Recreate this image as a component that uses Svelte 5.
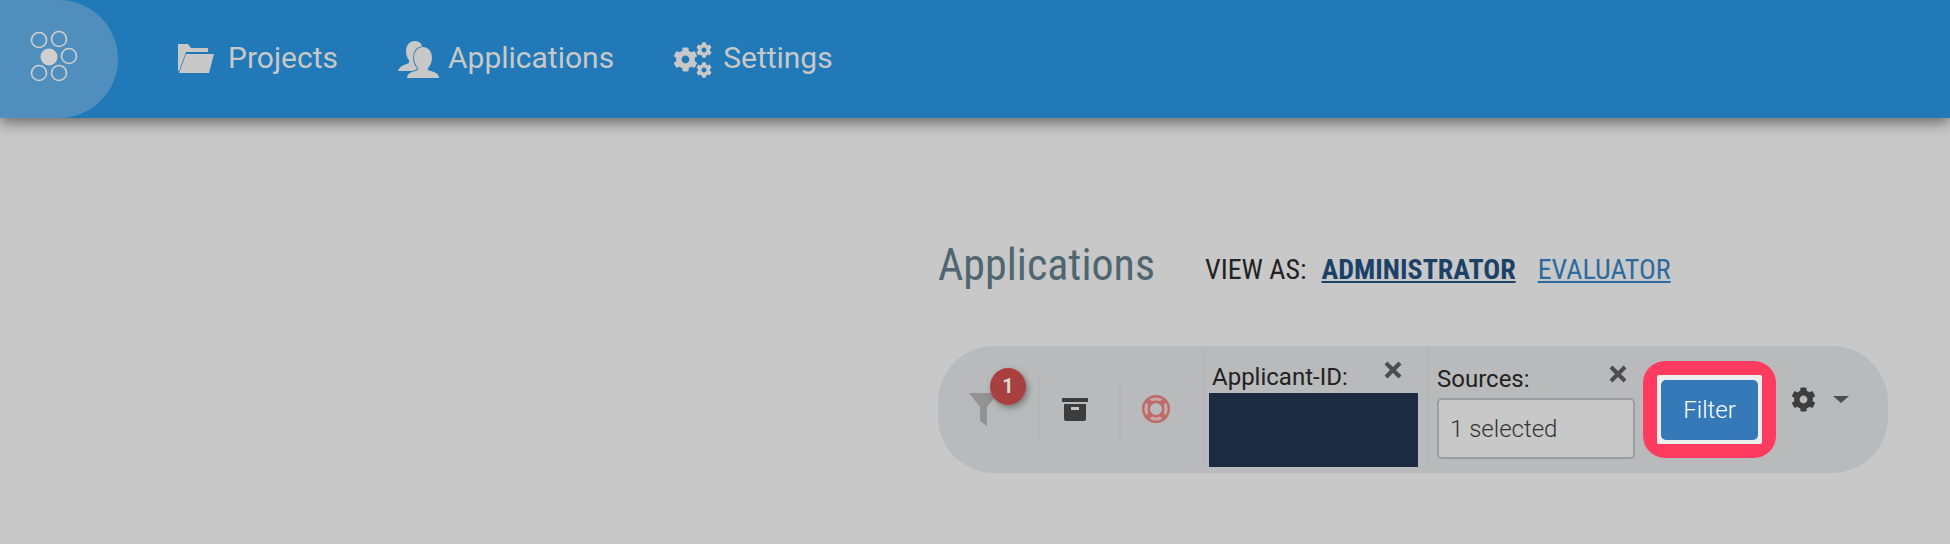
<script>
  const navItems = [
    { label: "Projects", icon: "folder" },
    { label: "Applications", icon: "users" },
    { label: "Settings", icon: "gears" }
  ];
  const rings = [[39, 40], [59, 39], [69, 56], [39, 73], [59, 73]];
  const gear = "M487.4 315.7l-42.6-24.6c4.3-23.2 4.3-47 0-70.2l42.6-24.6c4.9-2.8 7.1-8.6 5.5-14-11.1-35.6-30-67.8-54.7-94.6-3.8-4.1-10-5.1-14.8-2.3L380.8 110c-17.9-15.4-38.5-27.3-60.8-35.1V25.8c0-5.6-3.9-10.5-9.4-11.7-36.7-8.2-74.3-7.8-109.2 0-5.5 1.2-9.4 6.1-9.4 11.7V75c-22.2 7.9-42.8 19.8-60.8 35.1L88.7 85.5c-4.9-2.8-11-1.9-14.8 2.3-24.7 26.7-43.6 58.9-54.7 94.6-1.7 5.4.6 11.2 5.5 14L67.3 221c-4.3 23.2-4.3 47 0 70.2l-42.6 24.6c-4.9 2.8-7.1 8.6-5.5 14 11.1 35.6 30 67.8 54.7 94.6 3.8 4.1 10 5.1 14.8 2.3l42.6-24.6c17.9 15.4 38.5 27.3 60.8 35.1v49.2c0 5.6 3.9 10.5 9.4 11.7 36.7 8.2 74.3 7.8 109.2 0 5.5-1.2 9.4-6.1 9.4-11.7v-49.2c22.2-7.9 42.8-19.8 60.8-35.1l42.6 24.6c4.9 2.8 11 1.9 14.8-2.3 24.7-26.7 43.6-58.9 54.7-94.6 1.5-5.5-.7-11.3-5.6-14.1zM256 336c-44.1 0-80-35.9-80-80s35.9-80 80-80 80 35.9 80 80-35.9 80-80 80z";
</script>

<header>
  <div class="logo">
    <svg width="118" height="118" viewBox="0 0 118 118">
      <circle cx="49" cy="57" r="8.5" fill="#d0d0d0" />
      {#each rings as [x, y]}
        <circle cx={x} cy={y} r="7.5" fill="none" stroke="#d0d0d0" stroke-width="1.6" />
      {/each}
    </svg>
  </div>
  <nav>
    {#each navItems as item}
      <a class="nav-item {item.icon}" href="#top">
        {#if item.icon === "folder"}
          <svg width="36" height="30" viewBox="0 0 36 30">
            <path d="M0 0h10l3 4h17v4H8L1 27H0z" fill="#c8c8c8" />
            <path d="M8 10h28l-5 19H1z" fill="#c8c8c8" />
          </svg>
        {:else if item.icon === "users"}
          <svg width="41" height="37" viewBox="0 0 41 37">
            <path d="M17 0c5 0 8 4 8 10 0 4-2 8-3 10v3l3 1-8 6H0c1-3 3-5 6-6l5-2v-3c-2-2-3-6-3-9C8 4 12 0 17 0z" fill="#c8c8c8" />
            <path d="M25 6c5 0 9 4 9 11 0 4-2 8-4 10v2l6 2c3 1 5 3 5 6H9c0-3 2-5 5-6l6-2v-2c-2-2-4-6-4-10 0-7 4-11 9-11z" fill="#c8c8c8" stroke="#2179b7" stroke-width="1.6" paint-order="stroke" />
          </svg>
        {:else}
          <svg width="39" height="37" viewBox="0 0 39 37">
            <path d={gear} fill="#c8c8c8" transform="translate(0 6) scale(.0488)" />
            <path d={gear} fill="#c8c8c8" transform="translate(23 1) scale(.0312)" />
            <path d={gear} fill="#c8c8c8" transform="translate(23 21) scale(.0312)" />
          </svg>
        {/if}
        <span>{item.label}</span>
      </a>
    {/each}
  </nav>
</header>

<main>
  <div class="title-row">
    <h1>Applications</h1>
    <div class="view-as">
      <span class="view-label">VIEW AS:</span>
      <a class="role current" href="#top">ADMINISTRATOR</a>
      <a class="role" href="#top">EVALUATOR</a>
    </div>
  </div>

  <div class="toolbar">
    <div class="tool first">
      <svg width="29" height="33" viewBox="0 0 29 33">
        <path d="M0 0h29L18 14v19l-7-5V14z" fill="#939393" />
      </svg>
      <span class="badge">1</span>
    </div>
    <div class="tool second">
      <svg width="26" height="23" viewBox="0 0 26 23">
        <path d="M0 0h26v4H0z" fill="#3d3d3d" />
        <path d="M2 6h22v15a2 2 0 0 1-2 2H4a2 2 0 0 1-2-2z" fill="#3d3d3d" />
        <path d="M9 9h8v3H9z" fill="#c4c4c4" />
      </svg>
    </div>
    <div class="tool third">
      <svg width="28" height="28" viewBox="0 0 28 28">
        <circle cx="14" cy="14" r="10" fill="none" stroke="#c9a9a8" stroke-width="7" />
        <circle cx="14" cy="14" r="12.8" fill="none" stroke="#bd6a68" stroke-width="2.4" />
        <circle cx="14" cy="14" r="7.2" fill="none" stroke="#bd6a68" stroke-width="2.4" />
        <path d="M5 5l4.5 4.5M23 5l-4.5 4.5M5 23l4.5-4.5M23 23l-4.5-4.5" stroke="#bd6a68" stroke-width="5" />
      </svg>
    </div>

    <div class="field applicant">
      <div class="field-head">
        <span>Applicant-ID:</span>
        <svg class="close" width="18" height="18" viewBox="0 0 18 18">
          <path d="M2 2l14 14M16 2L2 16" stroke="#4d4d4d" stroke-width="4.2" />
        </svg>
      </div>
      <div class="redacted"></div>
    </div>

    <div class="field sources">
      <div class="field-head">
        <span>Sources:</span>
        <svg class="close" width="18" height="18" viewBox="0 0 18 18">
          <path d="M2 2l14 14M16 2L2 16" stroke="#4d4d4d" stroke-width="4.2" />
        </svg>
      </div>
      <div class="select">1 selected</div>
    </div>

    <div class="highlight">
      <div class="ring">
        <button>Filter</button>
      </div>
    </div>

    <div class="options">
      <svg width="25" height="25" viewBox="0 0 512 512"><path d={gear} fill="#3d3d3d" /></svg>
      <span class="caret"></span>
    </div>
  </div>
</main>

<style>
  :global(body) {
    background: #c8c8c8;
    font-family: Roboto, "Liberation Sans", sans-serif;
  }
  header {
    display: flex;
    height: 118px;
    background: #2179b7;
    box-shadow: 0 4px 14px rgba(0, 0, 0, 0.5);
  }
  .logo {
    width: 118px;
    height: 118px;
    background: #4f8ebd;
    border-radius: 0 59px 59px 0;
  }
  nav {
    display: flex;
    align-items: center;
    margin-left: 60px;
  }
  .nav-item {
    display: flex;
    align-items: center;
    color: #c8c8c8;
    font-size: 30px;
    text-decoration: none;
  }
  .nav-item span { margin-bottom: 4px; }
  .nav-item.folder svg { margin-right: 14px; }
  .nav-item.users { margin-left: 60px; }
  .nav-item.users svg { margin-right: 9px; }
  .nav-item.gears { margin-left: 59px; }
  .nav-item.gears svg { margin-right: 11px; }

  main {
    margin-left: 938px;
    width: 950px;
  }
  .title-row {
    display: flex;
    align-items: flex-start;
    height: 228px;
    padding-top: 121px;
    box-sizing: border-box;
  }
  h1 {
    margin: 0;
    font-size: 44px;
    font-weight: 400;
    font-stretch: condensed;
    color: #4f6570;
  }
  .view-as {
    display: flex;
    gap: 22px;
    margin: 14px 0 0 50px;
    font-size: 28px;
    font-stretch: condensed;
  }
  .view-label { color: #222; margin-right: -7px; }
  .role { color: #2c6a9f; }
  .role.current { color: #1c4168; font-weight: 700; }

  .toolbar {
    display: flex;
    height: 127px;
    background: #b9babc;
    border-radius: 56px;
  }
  .tool {
    position: relative;
    display: flex;
    align-items: center;
    justify-content: center;
    height: 62px;
    margin-top: 32px;
    border-right: 2px solid #b4b5b7;
  }
  .tool.first { width: 100px; }
  .tool.first svg { margin-left: -10px; }
  .tool.second { width: 79px; }
  .tool.second svg { margin-right: 10px; }
  .tool.third { width: 81px; border-right: 0; }
  .tool.third svg { margin-right: 12px; }
  .badge {
    position: absolute;
    left: 52px;
    top: -10px;
    width: 36px;
    height: 37px;
    border-radius: 50%;
    background: #a94040;
    color: #d8d8d8;
    font-size: 20px;
    font-weight: 700;
    line-height: 37px;
    text-align: center;
    box-shadow: 2px 3px 6px rgba(0, 0, 0, 0.35);
  }
  .field {
    display: flex;
    flex-direction: column;
    box-sizing: border-box;
    height: 120px;
    margin-top: 1px;
    border-left: 2px solid #b5b6b8;
    color: #222;
    font-size: 24px;
  }
  .field-head {
    display: flex;
    justify-content: space-between;
    align-items: flex-start;
    height: 46px;
  }
  .close { margin-top: 14px; }
  .applicant { width: 225px; padding: 0 9px 0 5px; }
  .applicant .field-head span { margin-top: 16px; margin-left: 3px; }
  .applicant .close { margin-right: 16px; }
  .redacted { height: 74px; background: #1c2a42; }
  .sources { width: 216px; padding: 0 8px 0 8px; }
  .sources .field-head { height: 51px; }
  .sources .field-head span { margin-top: 18px; }
  .sources .close { margin-right: 8px; margin-top: 18px; }
  .select {
    box-sizing: border-box;
    height: 61px;
    width: 198px;
    padding-left: 11px;
    line-height: 58px;
    border: 2px solid #9d9d9d;
    border-radius: 5px;
    background: #c8c8c8;
    color: #333;
    font-size: 24px;
    font-weight: 300;
  }
  .highlight {
    box-sizing: border-box;
    width: 133px;
    height: 97px;
    margin: 15px 0 0 0;
    padding: 14px;
    background: #ff3b60;
    border-radius: 22px;
  }
  .ring {
    display: flex;
    align-items: center;
    justify-content: center;
    height: 69px;
    background: #eeeeee;
    border-radius: 2px;
  }
  button {
    width: 97px;
    height: 60px;
    border: 0;
    border-radius: 5px;
    background: #3579b8;
    color: #fff;
    font-family: inherit;
    font-size: 24px;
    font-weight: 300;
  }
  .options {
    display: flex;
    align-items: flex-start;
    padding: 41px 0 0 15px;
  }
  .caret {
    margin: 9px 0 0 17px;
    border: 8px solid transparent;
    border-top: 7px solid #4d4d4d;
    border-bottom: 0;
  }
</style>
